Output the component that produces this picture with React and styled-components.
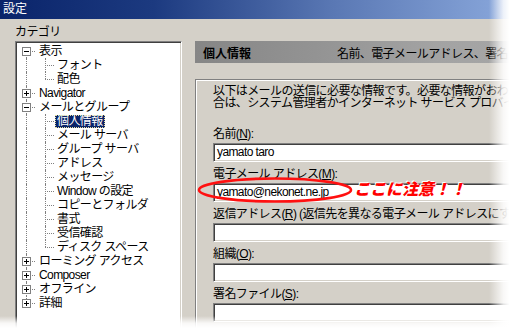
import React from "react";
import styled, { createGlobalStyle } from "styled-components";

const GlobalStyle = createGlobalStyle`
  html, body {
    margin: 0;
    padding: 0;
    background: #fff;
    overflow: hidden;
  }
`;

const treeItems = [
  { label: "表示", level: 1, open: true },
  { label: "フォント", level: 2 },
  { label: "配色", level: 2, lastChild: true },
  { label: "Navigator", level: 1, open: false },
  { label: "メールとグループ", level: 1, open: true },
  { label: "個人情報", level: 2, selected: true },
  { label: "メール サーバ", level: 2 },
  { label: "グループ サーバ", level: 2 },
  { label: "アドレス", level: 2 },
  { label: "メッセージ", level: 2 },
  { label: "Window の設定", level: 2 },
  { label: "コピーとフォルダ", level: 2 },
  { label: "書式", level: 2 },
  { label: "受信確認", level: 2 },
  { label: "ディスク スペース", level: 2, lastChild: true },
  { label: "ローミング アクセス", level: 1, open: false },
  { label: "Composer", level: 1, open: false },
  { label: "オフライン", level: 1, open: false },
  { label: "詳細", level: 1, open: false },
];

const fields = [
  { label: "名前", key: "N", value: "yamato taro" },
  { label: "電子メール アドレス", key: "M", value: "yamato@nekonet.ne.jp" },
  {
    label: "返信アドレス",
    key: "R",
    after: " (返信先を異なる電子メール アドレスにする場合)",
    value: "",
  },
  { label: "組織", key: "O", value: "" },
  { label: "署名ファイル", key: "S", value: "" },
];

export default function App() {
  return (
    <Window>
      <GlobalStyle />
      <TitleBar>設定</TitleBar>
      <Body>
        <LeftCol>
          <Caption>カテゴリ</Caption>
          <TreeBox>
            {treeItems.map((item, i) => (
              <Row key={item.label} $level={item.level}>
                <RootLine $first={i === 0} $last={i === treeItems.length - 1} />
                {item.level === 2 && <ChildLine $lastChild={item.lastChild} />}
                <Elbow $level={item.level} />
                {item.level === 1 && <Expander $open={item.open} />}
                <ItemLabel $selected={item.selected}>{item.label}</ItemLabel>
              </Row>
            ))}
          </TreeBox>
        </LeftCol>

        <RightPane>
          <HeaderBar>
            <HeaderTitle>個人情報</HeaderTitle>
            <HeaderDesc>名前、電子メールアドレス、署名ファイル</HeaderDesc>
          </HeaderBar>
          <GroupBox>
            <Intro>以下はメールの送信に必要な情報です。必要な情報がおわかりにならない場</Intro>
            <Intro>合は、システム管理者かインターネット サービス プロバイダにお問い合わせください。</Intro>
            <Fields>
              {fields.map((f) => (
                <Field key={f.key}>
                  <FieldLabel>
                    {f.label}(<u>{f.key}</u>){f.after || ""}:
                  </FieldLabel>
                  <TextBox>{f.value}</TextBox>
                </Field>
              ))}
            </Fields>
          </GroupBox>
        </RightPane>
      </Body>

      <Circle width="158" height="28" viewBox="0 0 158 28">
        <ellipse cx="78" cy="14" rx="76" ry="11.5" fill="none" stroke="#ff1010" strokeWidth="2.6" />
      </Circle>
      <Note>ここに注意！！</Note>

      <FadeRight />
      <FadeBottom />
    </Window>
  );
}

const Window = styled.div`
  position: relative;
  width: 513px;
  height: 328px;
  overflow: hidden;
  background: #d4d0c8;
  display: flex;
  flex-direction: column;
  font-family: "Liberation Sans", "Noto Sans CJK JP", sans-serif;
  font-size: 12px;
  letter-spacing: -0.6px;
  color: #000;
`;

const TitleBar = styled.div`
  flex: none;
  height: 19px;
  line-height: 19px;
  padding-left: 3px;
  color: #fff;
  font-size: 12px;
  letter-spacing: 0;
  background: linear-gradient(90deg, #0a246a 0%, #1c3a80 30%, #5a78b4 65%, #8aa8dc 100%);
`;

const Body = styled.div`
  flex: 1;
  display: flex;
  align-items: flex-start;
  gap: 13px;
  padding: 6px 0 0 15px;
`;

const LeftCol = styled.div`
  flex: none;
  width: 167px;
  display: flex;
  flex-direction: column;
  gap: 2px;
`;

const Caption = styled.div`
  height: 14px;
  line-height: 14px;
`;

const TreeBox = styled.div`
  height: 300px;
  box-sizing: border-box;
  background: #fff;
  border-top: 1px solid #808080;
  border-left: 1px solid #808080;
  border-right: 1px solid #fff;
  border-bottom: 1px solid #fff;
  box-shadow: inset 1px 1px 0 #404040, inset -1px -1px 0 #d4d0c8;
  padding: 2px 2px 0 1px;
`;

const Row = styled.div`
  position: relative;
  height: 14px;
  display: flex;
  align-items: center;
  padding-left: ${(p) => (p.$level === 2 ? 38 : 20)}px;
  white-space: nowrap;
`;

const RootLine = styled.span`
  position: absolute;
  left: 9px;
  top: ${(p) => (p.$first ? 7 : 0)}px;
  bottom: ${(p) => (p.$last ? 7 : 0)}px;
  border-left: 1px dotted #808080;
`;

const ChildLine = styled.span`
  position: absolute;
  left: 28px;
  top: 0;
  bottom: ${(p) => (p.$lastChild ? 7 : 0)}px;
  border-left: 1px dotted #808080;
`;

const Elbow = styled.span`
  position: absolute;
  left: ${(p) => (p.$level === 2 ? 28 : 9)}px;
  top: 7px;
  width: 9px;
  border-top: 1px dotted #808080;
`;

const Expander = styled.span`
  position: absolute;
  left: 5px;
  top: 3px;
  width: 9px;
  height: 9px;
  box-sizing: border-box;
  border: 1px solid #808080;
  background: #fff;
  &::before {
    content: "";
    position: absolute;
    left: 1px;
    top: 3px;
    width: 5px;
    height: 1px;
    background: #000;
  }
  &::after {
    content: "";
    display: ${(p) => (p.$open ? "none" : "block")};
    position: absolute;
    left: 3px;
    top: 1px;
    width: 1px;
    height: 5px;
    background: #000;
  }
`;

const ItemLabel = styled.span`
  line-height: 13px;
  padding: 0 2px;
  background: ${(p) => (p.$selected ? "#0a246a" : "transparent")};
  color: ${(p) => (p.$selected ? "#fff" : "#000")};
  outline: ${(p) => (p.$selected ? "1px dotted #e8e0a0" : "none")};
  outline-offset: -1px;
`;

const RightPane = styled.div`
  flex: none;
  width: 400px;
  margin-top: 16px;
  display: flex;
  flex-direction: column;
  gap: 16px;
`;

const HeaderBar = styled.div`
  height: 22px;
  display: flex;
  align-items: center;
  padding-left: 8px;
  background: linear-gradient(90deg, #868686 0%, #939393 30%, #a3a3a3 60%, #a8a8a8 100%);
  white-space: nowrap;
`;

const HeaderTitle = styled.span`
  width: 134px;
  flex: none;
  font-weight: bold;
  letter-spacing: 0;
`;

const HeaderDesc = styled.span``;

const GroupBox = styled.div`
  height: 260px;
  border: 1px solid #808080;
  box-shadow: inset 1px 1px 0 #fff;
  padding: 5px 0 0 17px;
`;

const Intro = styled.div`
  line-height: 12px;
  white-space: nowrap;
`;

const Fields = styled.div`
  margin-top: 18px;
  display: flex;
  flex-direction: column;
`;

const Field = styled.div`
  display: flex;
  flex-direction: column;
  gap: 2px;
  margin-bottom: 5px;
`;

const FieldLabel = styled.div`
  height: 14px;
  line-height: 14px;
  white-space: nowrap;
`;

const TextBox = styled.div`
  height: 19px;
  box-sizing: border-box;
  background: #fff;
  border-top: 1px solid #808080;
  border-left: 1px solid #808080;
  border-right: 1px solid #fff;
  border-bottom: 1px solid #fff;
  box-shadow: inset 1px 1px 0 #404040, inset -1px -1px 0 #d4d0c8;
  padding-left: 3px;
  line-height: 17px;
`;

const Circle = styled.svg`
  position: absolute;
  left: 197px;
  top: 176px;
`;

const Note = styled.div`
  position: absolute;
  left: 354px;
  top: 177px;
  font-family: "Noto Sans CJK JP", sans-serif;
  font-size: 16px;
  line-height: 22px;
  font-weight: 900;
  font-style: italic;
  letter-spacing: 0;
  color: #ff0000;
  text-shadow: 1px 1px 0 #fff, -1px -1px 0 #fff;
`;

const FadeRight = styled.div`
  position: absolute;
  top: 0;
  right: 0;
  bottom: 0;
  width: 24px;
  background: linear-gradient(90deg, rgba(255, 255, 255, 0) 0%, rgba(255, 255, 255, 0.85) 60%, #fff 85%);
`;

const FadeBottom = styled.div`
  position: absolute;
  left: 0;
  right: 0;
  bottom: 0;
  height: 12px;
  background: linear-gradient(180deg, rgba(255, 255, 255, 0) 0%, rgba(255, 255, 255, 0.85) 60%, #fff 100%);
`;
